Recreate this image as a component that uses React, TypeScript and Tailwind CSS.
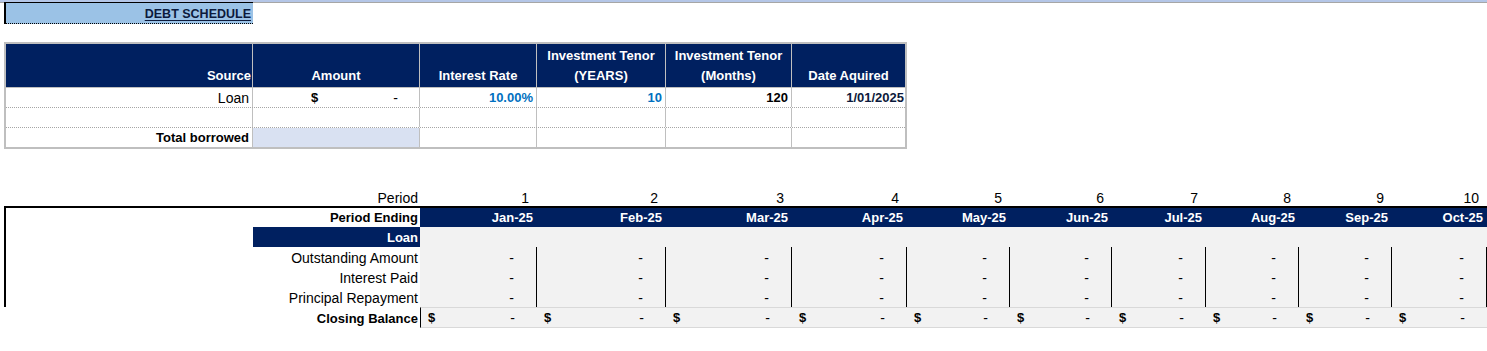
import { FC } from "react";

const navy = "bg-[#002060]";

const periodCols = [
  { w: "w-[117px]", n: 1, m: "Jan-25" },
  { w: "w-[129px]", n: 2, m: "Feb-25" },
  { w: "w-[126px]", n: 3, m: "Mar-25" },
  { w: "w-[115px]", n: 4, m: "Apr-25" },
  { w: "w-[103px]", n: 5, m: "May-25" },
  { w: "w-[102px]", n: 6, m: "Jun-25" },
  { w: "w-[94px]", n: 7, m: "Jul-25" },
  { w: "w-[93px]", n: 8, m: "Aug-25" },
  { w: "w-[93px]", n: 9, m: "Sep-25" },
  { w: "w-[95px]", n: 10, m: "Oct-25" },
];

const lineItems = ["Outstanding Amount", "Interest Paid", "Principal Repayment"];

const SourceTable: FC = () => {
  const head = "flex flex-col justify-end items-center pb-[1px] leading-[20px] text-[13px] font-bold text-white border-r border-[#BFBFBF]";
  const cell = "flex items-end pb-[1px] justify-end pr-[3px] border-r border-[#BFBFBF]";
  return (
    <div className="ml-[4px] mt-[18px] w-[903px] border-2 border-[#BFBFBF]">
      {/* header */}
      <div className={`flex h-[44px] ${navy} border-b border-[#BFBFBF]`}>
        <div className={`${head} w-[247px] !items-end pr-[1px]`}>Source</div>
        <div className={`${head} w-[167px]`}>Amount</div>
        <div className={`${head} w-[117px]`}>Interest Rate</div>
        <div className={`${head} w-[129px]`}>
          <span>Investment Tenor</span>
          <span>(YEARS)</span>
        </div>
        <div className={`${head} w-[126px]`}>
          <span>Investment Tenor</span>
          <span>(Months)</span>
        </div>
        <div className={`${head} flex-1 border-r-0`}>Date Aquired</div>
      </div>

      {/* loan row */}
      <div className="flex h-[20px] text-[14px] border-b border-dotted border-[#A6A6A6]">
        <div className={`${cell} w-[247px]`}>Loan</div>
        <div className="flex items-end pb-[1px] justify-between w-[167px] pl-[58px] pr-[21px] border-r border-[#BFBFBF]">
          <span className="font-bold text-[13px]">$</span>
          <span>-</span>
        </div>
        <div className={`${cell} w-[117px] font-bold text-[13px] text-[#0070C0]`}>10.00%</div>
        <div className={`${cell} w-[129px] font-bold text-[13px] text-[#0070C0]`}>10</div>
        <div className={`${cell} w-[126px] font-bold text-[13px] text-black`}>120</div>
        <div className="flex flex-1 items-end pb-[1px] justify-end pr-[1px] font-bold text-[13px] text-[#0c1a3c]">1/01/2025</div>
      </div>

      {/* empty row */}
      <div className="flex h-[20px] border-b border-dotted border-[#A6A6A6]">
        <div className={`${cell} w-[247px]`} />
        <div className={`${cell} w-[167px]`} />
        <div className={`${cell} w-[117px]`} />
        <div className={`${cell} w-[129px]`} />
        <div className={`${cell} w-[126px]`} />
        <div className="flex-1" />
      </div>

      {/* total row */}
      <div className="flex h-[19px]">
        <div className={`${cell} w-[247px] font-bold text-[13px]`}>Total borrowed</div>
        <div className="w-[167px] bg-[#D9E1F2] border-r border-[#BFBFBF]" />
        <div className={`${cell} w-[117px]`} />
        <div className={`${cell} w-[129px]`} />
        <div className={`${cell} w-[126px]`} />
        <div className="flex-1" />
      </div>
    </div>
  );
};

const Schedule: FC = () => {
  return (
    <div className="ml-[4px] mt-[38px] w-[1483px]">
      {/* period numbers */}
      <div className="flex h-[19px] items-end text-[14px]">
        <div className="w-[416px] text-right pr-[2px]">Period</div>
        {periodCols.map((c) => (
          <div key={c.n} className={`${c.w} text-right pr-[8px]`}>
            {c.n}
          </div>
        ))}
      </div>

      <div className="border-l-2 border-t-2 border-black">
        {/* period ending */}
        <div className="flex h-[19px]">
          <div className="w-[414px] flex items-end pb-[1px] justify-end pr-[2px] font-bold text-[13px]">Period Ending</div>
          <div className={`flex flex-1 h-full ${navy}`}>
            {periodCols.map((c) => (
              <div key={c.n} className={`${c.w} flex items-end pb-[1px] justify-end pr-[4px] font-bold text-[13px] text-white`}>
                {c.m}
              </div>
            ))}
          </div>
        </div>

        {/* loan band */}
        <div className="flex h-[20px]">
          <div className="w-[247px]" />
          <div className={`w-[167px] ${navy} flex items-end pb-[1px] justify-end pr-[2px] font-bold text-[13px] text-white`}>Loan</div>
          <div className="flex-1 bg-[#F2F2F2]" />
        </div>

        {lineItems.map((label) => (
          <div key={label} className="flex h-[20px] text-[14px]">
            <div className="w-[414px] flex items-end pb-[1px] justify-end pr-[2px]">{label}</div>
            <div className="flex flex-1 bg-[#F2F2F2]">
              {periodCols.map((c) => (
                <div key={c.n} className={`${c.w} flex items-end pb-[1px] justify-end pr-[22px] border-r border-black`}>
                  -
                </div>
              ))}
            </div>
          </div>
        ))}
      </div>

      {/* closing balance */}
      <div className="flex h-[21px] text-[14px]">
        <div className="w-[416px] flex items-end pb-[1px] justify-end pr-[2px] font-bold text-[13px]">Closing Balance</div>
        <div className="flex flex-1 bg-[#F2F2F2] border-y border-[#D9D9D9] border-l border-l-black">
          {periodCols.map((c, i) => (
            <div key={c.n} className={`${i === 0 ? "w-[116px]" : c.w} flex items-end pb-[1px] justify-between pl-[7px] pr-[22px]`}>
              <span className="font-bold text-[13px]">$</span>
              <span>-</span>
            </div>
          ))}
        </div>
      </div>
    </div>
  );
};

const App: FC = () => {
  return (
    <div className="w-[1487px] h-[351px] bg-white overflow-hidden text-black leading-[16px] font-['Liberation_Sans',Arial,sans-serif]">
      <div className="h-[2px] bg-[#B4C6E7]" />
      <div className="flex h-[1px] bg-[#A6A6A6]">
        <div className="ml-[4px] w-[249px] bg-black" />
      </div>
      <div className="ml-[4px] w-[249px] h-[21px] flex flex-col border-l-2 border-black bg-[#9BC2E6]">
        <div className="flex-1 flex items-end pb-[1px] justify-end pr-[2px]">
          <span className="font-bold text-[12.5px] underline underline-offset-2 text-[#0c1a3c]">DEBT SCHEDULE</span>
        </div>
        <div className="h-[1px] border-t border-dotted border-black" />
      </div>

      <SourceTable />
      <Schedule />
    </div>
  );
};

export default App;
